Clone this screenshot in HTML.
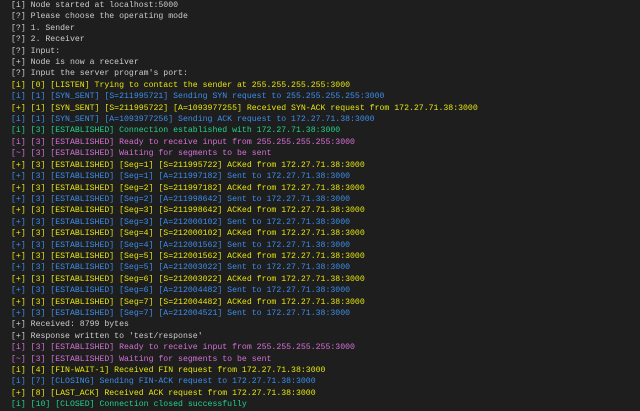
<!DOCTYPE html>
<html><head><meta charset="utf-8"><style>
html,body{margin:0;padding:0;background:#1e1e1e;width:640px;height:411px;overflow:hidden}
pre{margin:0;padding:0 0 0 11px;font-family:"Liberation Mono",monospace;font-size:8.2px;line-height:11.4px;color:#cccccc;white-space:pre}
.y{color:#e5e510}.b{color:#3b8eea}.g{color:#23d18b}.m{color:#d670d6}
</style></head><body><pre>[i] Node started at localhost:5000
[?] Please choose the operating mode
[?] 1. Sender
[?] 2. Receiver
[?] Input:
[+] Node is now a receiver
[?] Input the server program's port:
<span class="y">[i] [0] [LISTEN] Trying to contact the sender at 255.255.255.255:3000</span>
<span class="b">[i] [1] [SYN_SENT] [S=211995721] Sending SYN request to 255.255.255.255:3000</span>
<span class="y">[+] [1] [SYN_SENT] [S=211995722] [A=1093977255] Received SYN-ACK request from 172.27.71.38:3000</span>
<span class="b">[i] [1] [SYN_SENT] [A=1093977256] Sending ACK request to 172.27.71.38:3000</span>
<span class="g">[i] [3] [ESTABLISHED] Connection established with 172.27.71.38:3000</span>
<span class="m">[i] [3] [ESTABLISHED] Ready to receive input from 255.255.255.255:3000</span>
<span class="m">[~] [3] [ESTABLISHED] Waiting for segments to be sent</span>
<span class="y">[+] [3] [ESTABLISHED] [Seg=1] [S=211995722] ACKed from 172.27.71.38:3000</span>
<span class="b">[+] [3] [ESTABLISHED] [Seg=1] [A=211997182] Sent to 172.27.71.38:3000</span>
<span class="y">[+] [3] [ESTABLISHED] [Seg=2] [S=211997182] ACKed from 172.27.71.38:3000</span>
<span class="b">[+] [3] [ESTABLISHED] [Seg=2] [A=211998642] Sent to 172.27.71.38:3000</span>
<span class="y">[+] [3] [ESTABLISHED] [Seg=3] [S=211998642] ACKed from 172.27.71.38:3000</span>
<span class="b">[+] [3] [ESTABLISHED] [Seg=3] [A=212000102] Sent to 172.27.71.38:3000</span>
<span class="y">[+] [3] [ESTABLISHED] [Seg=4] [S=212000102] ACKed from 172.27.71.38:3000</span>
<span class="b">[+] [3] [ESTABLISHED] [Seg=4] [A=212001562] Sent to 172.27.71.38:3000</span>
<span class="y">[+] [3] [ESTABLISHED] [Seg=5] [S=212001562] ACKed from 172.27.71.38:3000</span>
<span class="b">[+] [3] [ESTABLISHED] [Seg=5] [A=212003022] Sent to 172.27.71.38:3000</span>
<span class="y">[+] [3] [ESTABLISHED] [Seg=6] [S=212003022] ACKed from 172.27.71.38:3000</span>
<span class="b">[+] [3] [ESTABLISHED] [Seg=6] [A=212004482] Sent to 172.27.71.38:3000</span>
<span class="y">[+] [3] [ESTABLISHED] [Seg=7] [S=212004482] ACKed from 172.27.71.38:3000</span>
<span class="b">[+] [3] [ESTABLISHED] [Seg=7] [A=212004521] Sent to 172.27.71.38:3000</span>
[+] Received: 8799 bytes
[+] Response written to 'test/response'
<span class="m">[i] [3] [ESTABLISHED] Ready to receive input from 255.255.255.255:3000</span>
<span class="m">[~] [3] [ESTABLISHED] Waiting for segments to be sent</span>
<span class="y">[i] [4] [FIN-WAIT-1] Received FIN request from 172.27.71.38:3000</span>
<span class="b">[i] [7] [CLOSING] Sending FIN-ACK request to 172.27.71.38:3000</span>
<span class="y">[+] [8] [LAST_ACK] Received ACK request from 172.27.71.38:3000</span>
<span class="g">[i] [10] [CLOSED] Connection closed successfully</span></pre></body></html>
